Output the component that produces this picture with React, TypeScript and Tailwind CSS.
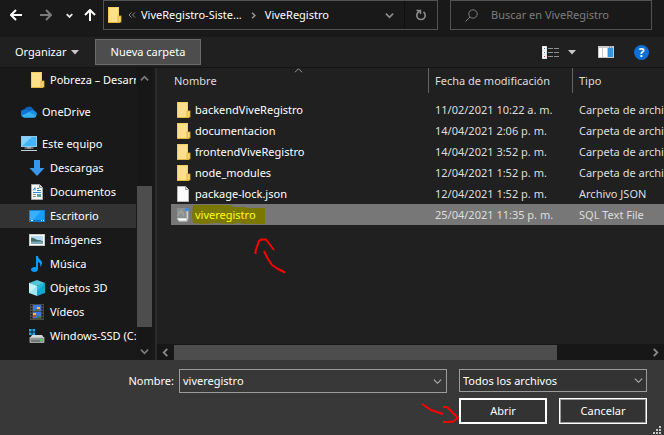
import type { ReactNode } from "react";

type IconProps = { className?: string };

function Folder({ className = "h-4 w-4" }: IconProps) {
  return (
    <svg viewBox="0 0 16 16" className={`shrink-0 ${className}`} aria-hidden="true">
      <rect x="2" y="0" width="11" height="16" fill="#ffe08a" />
      <path d="M2.5 0.5h10v9" fill="none" stroke="#f3cf62" />
      <path d="M2.5 0v16" stroke="#f5cb52" />
      <path d="M2 15.5h12" stroke="#e3b93c" />
      <rect x="12" y="9" width="3" height="6" fill="#f7d573" stroke="#dcae35" strokeWidth="0.8" />
    </svg>
  );
}

function FilePage() {
  return (
    <svg viewBox="0 0 16 16" className="h-4 w-4 shrink-0" aria-hidden="true">
      <path d="M2.500.5h8l3 3v12h-11z" fill="#fafafa" stroke="#b9b9b9" />
      <path d="M10.500.5v3h3" fill="#e2e2e2" stroke="#a0a0a0" />
    </svg>
  );
}

function SqlFile() {
  return (
    <svg viewBox="0 0 16 16" className="h-4 w-4 shrink-0" aria-hidden="true">
      <path d="M2 1h10l1.500 3v8l-1.500 3H4l-2-3z" fill="#a9a9a9" />
      <path d="M2 1h9v10H2z" fill="#8b908e" />
      <path d="M3 9l2-5 4 5M6 3l3 4" fill="none" stroke="#a4a8a6" />
      <path d="M2 11h9.500l.5 3H4z" fill="#dcdcdc" />
      <path d="M4 12.500h7" stroke="#fff" />
      <path d="M12.500 4v8" stroke="#d2d2d2" />
      <rect x="10" y="1" width="4" height="3" rx="1" fill="#3b8be6" />
    </svg>
  );
}

function Cloud() {
  return (
    <svg viewBox="0 0 16 16" className="h-4 w-4 shrink-0" aria-hidden="true">
      <path d="M3 7a5 5 0 0 1 9.500-1.500l1 3-6 3z" fill="#0a62b8" />
      <path d="M3.500 5.500a4 4 0 0 1 4 .8L12 9l-8 4H3A3.700 3.700 0 0 1 3.500 5.500z" fill="#1272cf" />
      <path d="M8 8l2.500-2a3.500 3.500 0 0 1 3 1 3 3 0 0 1 1.500 5L9 12z" fill="#1a8fe3" />
      <path d="M.8 11.500L8 8l7.300 4a2.500 2.500 0 0 1-2.300 1.700H3.300a3 3 0 0 1-2.500-2.200z" fill="#35b0f2" />
    </svg>
  );
}

function Computer() {
  return (
    <svg viewBox="0 0 16 16" className="h-4 w-4 shrink-0" aria-hidden="true">
      <rect x="0.500" y="0.500" width="15" height="10" fill="#42b4fa" stroke="#8fc7e8" />
      <path d="M1 10V1h10z" fill="#83d2ff" />
      <path d="M6 11h4v1.500H6z" fill="#8a9aa5" />
      <path d="M3.500 12h9" stroke="#aebac2" />
      <path d="M0 14.500h16" stroke="#c3ced6" />
    </svg>
  );
}

function Download() {
  return (
    <svg viewBox="0 0 16 16" className="h-4 w-4 shrink-0" aria-hidden="true">
      <path d="M5 0h6v8h4.500L8 16 .5 8H5z" fill="#3996e8" />
    </svg>
  );
}

function Documents() {
  return (
    <svg viewBox="0 0 16 16" className="h-4 w-4 shrink-0" aria-hidden="true">
      <path d="M2.500.5h8l3 3v12h-11z" fill="#fcfcfc" stroke="#a9a9a9" />
      <path d="M10.500.5v3h3" fill="#ddd" stroke="#8f8f8f" />
      <path d="M4 6.500l2-3v3M8 4.500h2M8 6.500h4M4 8.500h8" fill="none" stroke="#2f86d6" />
      <path d="M4 10.500h3M4 12.500h3" stroke="#8a8a8a" />
      <rect x="8" y="10" width="4" height="3" fill="#59a384" />
      <path d="M8 10.500h4" stroke="#4a9be0" />
    </svg>
  );
}

function Desktop() {
  return (
    <svg viewBox="0 0 16 16" className="h-4 w-4 shrink-0" aria-hidden="true">
      <rect x="0.500" y="2.500" width="15" height="11" fill="#1a9dfa" stroke="#1583d4" />
      <path d="M1 13V3h11L3 13z" fill="#38b0ff" />
      <path d="M1 12.500h14" stroke="#0f6fb8" />
      <path d="M2 12.500h2M12 12.500h1M14 12.500h1" stroke="#d7efff" />
    </svg>
  );
}

function Pictures() {
  return (
    <svg viewBox="0 0 16 16" className="h-4 w-4 shrink-0" aria-hidden="true">
      <rect x="0.500" y="2.500" width="15" height="11" fill="#fff" stroke="#c9c9c9" />
      <rect x="2" y="4" width="12" height="8" fill="#b6dcf5" />
      <path d="M2 6c3-1 4 2 7 2s3 1 5 1v1H2z" fill="#3f6f68" />
      <path d="M2 9.500h12V12H2z" fill="#7ba6b5" />
    </svg>
  );
}

function Music() {
  return (
    <svg viewBox="0 0 16 16" className="h-4 w-4 shrink-0" aria-hidden="true">
      <path d="M7 0h2c0 3 4 4 4 7 0 2-1 3-2 4 1-3 0-4-2-5v7c0 1.700-1.600 3-3.500 3S2 15 2 13.500 4 11 5.500 11c.6 0 1 .1 1.500.3z" fill="#0a9cf5" />
    </svg>
  );
}

function Cube() {
  return (
    <svg viewBox="0 0 16 16" className="h-4 w-4 shrink-0" aria-hidden="true">
      <path d="M0 3l8-3 8 3-8 3z" fill="#4fc5da" />
      <path d="M0 3l8 3v10l-8-3z" fill="#9be9f0" />
      <path d="M0 3l8 3-8 7z" fill="#c0f4f7" />
      <path d="M16 3L8 6v10l8-3z" fill="#12a5cf" />
      <path d="M16 3L8 6v5z" fill="#2cb9dc" />
    </svg>
  );
}

function Film() {
  return (
    <svg viewBox="0 0 16 16" className="h-4 w-4 shrink-0" aria-hidden="true">
      <rect x="1" y="0" width="14" height="16" fill="#4b4b4b" />
      <path d="M2.500 1v15M13.500 1v15" stroke="#161616" strokeWidth="1.500" strokeDasharray="1.500 1.500" />
      <rect x="4" y="1" width="8" height="6" fill="#3d78d8" />
      <rect x="4" y="8" width="8" height="6" fill="#3d78d8" />
      <path d="M8 3h3v2H8zM4 9h3v2H4z" fill="#e8c22c" />
      <path d="M6 5h4v2H6zM8 12h4v2H8z" fill="#3a7d44" />
      <path d="M9 5h2v1H9zM5 11h2v2H5z" fill="#c7402f" />
    </svg>
  );
}

function Drive() {
  return (
    <svg viewBox="0 0 16 16" className="h-4 w-4 shrink-0" aria-hidden="true">
      <path d="M0 1h2.500v2.500H0zM3.500 1H6v2.500H3.500zM0 4.500h2.500V7H0zM3.500 4.500H6V7H3.500z" fill="#10aef5" />
      <path d="M3 7h10l2 3H1z" fill="#d6d6d6" />
      <rect x="1" y="9.500" width="14" height="5" fill="#8f9394" stroke="#c9c9c9" strokeWidth="0.700" />
      <path d="M2 13h9" stroke="#55595a" />
      <rect x="11" y="11" width="2" height="2" fill="#39e052" />
    </svg>
  );
}

type ChevronProps = { dir: "up" | "down" | "left" | "right"; className: string; width?: number };

function Chevron({ dir, className, width = 2 }: ChevronProps) {
  const paths = {
    up: "M1 7l4-4 4 4",
    down: "M1 3l4 4 4-4",
    left: "M7 1L3 5l4 4",
    right: "M3 1l4 4-4 4",
  };
  return (
    <svg viewBox="0 0 10 10" className={`shrink-0 ${className}`} aria-hidden="true">
      <path d={paths[dir]} fill="none" stroke="currentColor" strokeWidth={width} />
    </svg>
  );
}

function Caret() {
  return (
    <svg viewBox="0 0 8 5" className="h-[5px] w-2 shrink-0" aria-hidden="true">
      <path d="M0 0h8L4 4.500z" fill="#c8c8c8" />
    </svg>
  );
}

function NavBar() {
  return (
    <header className="flex h-[37px] items-start bg-[#191919]">
      <nav className="flex h-[30px] w-[103px] shrink-0 items-center pl-2.5">
        <button aria-label="Atrás" className="text-white">
          <svg viewBox="0 0 12 12" className="h-3 w-3" aria-hidden="true">
            <path d="M6 1L1 6l5 5M1 6h11" fill="none" stroke="currentColor" strokeWidth="2" />
          </svg>
        </button>
        <button aria-label="Adelante" className="ml-[18px] text-[#7a7a7a]">
          <svg viewBox="0 0 12 12" className="h-3 w-3" aria-hidden="true">
            <path d="M6 1l5 5-5 5M11 6H0" fill="none" stroke="currentColor" strokeWidth="2" />
          </svg>
        </button>
        <button aria-label="Ubicaciones recientes" className="ml-3.5 text-[#e6e6e6]">
          <Chevron dir="down" className="h-[7px] w-[7px]" width={2.5} />
        </button>
        <button aria-label="Subir" className="ml-[11px] text-white">
          <svg viewBox="0 0 12 12" className="h-3 w-3" aria-hidden="true">
            <path d="M1 6l5-5 5 5M6 1v11" fill="none" stroke="currentColor" strokeWidth="2" />
          </svg>
        </button>
      </nav>
      <div className="flex h-[30px] min-w-0 flex-1 items-center border border-[#535353] pl-0.5 text-white">
        <Folder />
        <span className="ml-1.5 flex text-[#8a8a8a]">
          <svg viewBox="0 0 8 6" className="h-1.5 w-2" aria-hidden="true">
            <path d="M3.500.5L1 3l2.500 2.500M7 .5L4.500 3 7 5.500" fill="none" stroke="currentColor" />
          </svg>
        </span>
        <button className="ml-[5px] truncate">ViveRegistro-Siste...</button>
        <Chevron dir="right" className="ml-2 h-[7px] w-[7px] text-[#9a9a9a]" />
        <button className="ml-2">ViveRegistro</button>
        <button aria-label="Ubicaciones anteriores" className="ml-auto text-[#8a8a8a]">
          <Chevron dir="down" className="h-[9px] w-[9px]" />
        </button>
        <button
          aria-label="Actualizar"
          className="ml-2.5 flex h-full w-[33px] items-center justify-center border-l border-[#101010] text-[#8c8c8c]"
        >
          <svg viewBox="0 0 12 12" className="h-3 w-3" aria-hidden="true">
            <path d="M8.500 3A4.200 4.200 0 1 1 3.500 3L5 2" fill="none" stroke="currentColor" strokeWidth="1.600" />
            <path d="M1.500 1.500H5.500V5" fill="none" stroke="currentColor" strokeWidth="1.500" />
          </svg>
        </button>
      </div>
      <label className="mx-3 flex h-[30px] w-[202px] shrink-0 items-center border border-[#535353] pl-3.5 text-[#7d7d7d]">
        <svg viewBox="0 0 13 13" className="h-[13px] w-[13px] shrink-0" aria-hidden="true">
          <circle cx="8" cy="5" r="4.200" fill="none" stroke="currentColor" />
          <path d="M5 8L.5 12.500" stroke="currentColor" />
        </svg>
        <input
          type="search"
          aria-label="Buscar en ViveRegistro"
          placeholder="Buscar en ViveRegistro"
          className="ml-[13px] min-w-0 flex-1 bg-transparent outline-none placeholder:text-[#7d7d7d]"
        />
      </label>
    </header>
  );
}

function Toolbar() {
  return (
    <div className="flex h-[31px] items-center border-b border-[#141414] bg-[#202020] pr-[15px] pl-[15px] text-white">
      <button className="flex w-20 items-center justify-between pr-4">
        Organizar <Caret />
      </button>
      <button className="h-[26px] w-[106px] border border-[#6a6a6a] bg-[#4d4d4d]">Nueva carpeta</button>
      <button aria-label="Cambiar la vista" className="ml-auto">
        <svg viewBox="0 0 17 13" className="h-[13px] w-[17px]" aria-hidden="true">
          <path d="M0 0h5v13H0z" fill="#e2e2e2" />
          <path d="M1 1h3v3H1zM1 5h3v3H1zM1 9h3v3H1z" fill="#fff" />
          <path d="M2 2h1v1H2zM2 6h1v1H2z" fill="#2b70c9" />
          <path d="M2 10h1v1H2z" fill="#c42b3c" />
          <path d="M6 2.500h11M6 6.500h11M6 10.500h11" stroke="#8f8f8f" strokeDasharray="5 1" />
        </svg>
      </button>
      <button aria-label="Más opciones" className="ml-[9px]">
        <Caret />
      </button>
      <button aria-label="Mostrar el panel de vista previa" className="ml-[22px]">
        <svg viewBox="0 0 16 12" className="h-3 w-4" aria-hidden="true">
          <path d="M0 0h16v12H0z" fill="#c9c9c9" />
          <path d="M1 2h3v9H1zM5 2h4v9H5z" fill="#fff" />
          <path d="M10 2h5v9h-5z" fill="#3794e0" />
          <path d="M11 1h1M13 1h1" stroke="#2d79bd" />
        </svg>
      </button>
      <button aria-label="Ayuda" className="ml-5 h-[15px] w-[15px] rounded-full bg-[#0b6fd6] text-xs leading-[15px] font-bold">
        ?
      </button>
    </div>
  );
}

const places: { name: string; icon: ReactNode }[] = [
  { name: "Descargas", icon: <Download /> },
  { name: "Documentos", icon: <Documents /> },
  { name: "Escritorio", icon: <Desktop /> },
  { name: "Imágenes", icon: <Pictures /> },
  { name: "Música", icon: <Music /> },
  { name: "Objetos 3D", icon: <Cube /> },
  { name: "Vídeos", icon: <Film /> },
  { name: "Windows-SSD (C:)", icon: <Drive /> },
];

function Sidebar() {
  return (
    <aside className="flex w-[157px] shrink-0 border-r-2 border-[#2b2b2b] bg-[#191919] text-white">
      <div className="w-[136px] overflow-hidden pb-3 whitespace-nowrap">
        <div className="flex h-6 items-center gap-[5px] pl-[29px]">
          <Folder /> Pobreza – Desarrollo
        </div>
        <div className="my-2 flex h-6 items-center gap-[5px] pl-[21px]">
          <Cloud /> OneDrive
        </div>
        <div className="flex h-6 items-center gap-[5px] pl-[21px]">
          <Computer /> Este equipo
        </div>
        <ul>
          {places.map((place) => (
            <li
              key={place.name}
              className={`flex h-6 items-center gap-[5px] pl-[29px] ${place.name === "Escritorio" ? "bg-[#333333]" : ""}`}
            >
              {place.icon} {place.name}
            </li>
          ))}
        </ul>
      </div>
      <div className="ml-px flex w-[15px] flex-col items-center bg-[#171717] py-1 text-[#7a7a7a]">
        <Chevron dir="up" className="mt-0.5 h-[9px] w-[9px]" />
        <div className="mt-[103px] w-full flex-1 bg-[#4d4d4d]" />
        <Chevron dir="down" className="mt-5 h-[9px] w-[9px]" />
      </div>
    </aside>
  );
}

const files = [
  { name: "backendViveRegistro", date: "11/02/2021 10:22 a. m.", type: "Carpeta de archivos" },
  { name: "documentacion", date: "14/04/2021 2:06 p. m.", type: "Carpeta de archivos" },
  { name: "frontendViveRegistro", date: "14/04/2021 3:52 p. m.", type: "Carpeta de archivos" },
  { name: "node_modules", date: "12/04/2021 1:52 p. m.", type: "Carpeta de archivos" },
  { name: "package-lock.json", date: "12/04/2021 1:52 p. m.", type: "Archivo JSON" },
  { name: "viveregistro", date: "25/04/2021 11:35 p. m.", type: "SQL Text File" },
];

function fileIcon(type: string) {
  if (type === "Archivo JSON") return <FilePage />;
  if (type === "SQL Text File") return <SqlFile />;
  return <Folder />;
}

function FileList() {
  return (
    <main className="relative flex min-w-0 flex-1 flex-col overflow-hidden bg-[#202020]">
      <Chevron dir="up" className="absolute -top-0.5 left-[137px] h-[9px] w-[9px] text-[#a5a5a5]" width={1} />
      <div className="ml-3.5">
        <table className="w-full table-fixed border-collapse text-left whitespace-nowrap text-[#dedede]">
          <thead>
            <tr className="h-[31px] align-top">
              <th className="w-[258px] p-0 font-normal">
                <div className="h-[25px] border-r border-[#636363] pl-[3px] leading-[25px]">Nombre</div>
              </th>
              <th className="w-36 p-0 font-normal">
                <div className="h-[25px] border-r border-[#636363] pl-1.5 leading-[25px]">Fecha de modificación</div>
              </th>
              <th className="p-0 font-normal">
                <div className="pl-1.5 leading-[25px]">Tipo</div>
              </th>
            </tr>
          </thead>
          <tbody>
            {files.map((file) => {
              const selected = file.name === "viveregistro";
              return (
                <tr key={file.name} className={`h-[21px] ${selected ? "bg-[#777777]" : ""}`}>
                  <td className="p-0">
                    <div className="flex items-center gap-1 pl-1">
                      {fileIcon(file.type)}
                      {selected ? (
                        <span className="relative text-[#ffff00]">
                          <svg
                            viewBox="0 0 73 20"
                            className="absolute top-1/2 -left-[3px] h-5 w-[73px] -translate-y-1/2"
                            aria-hidden="true"
                          >
                            <path d="M1 0h39l1 2h12l2 1h18v16H54l-8-1-6 1-16-1-14 1-9-1-1-8z" fill="#7a7800" />
                          </svg>
                          <span className="relative">{file.name}</span>
                        </span>
                      ) : (
                        <span className="text-white">{file.name}</span>
                      )}
                    </div>
                  </td>
                  <td className="p-0 pl-1.5">{file.date}</td>
                  <td className="overflow-hidden p-0 pl-1.5">{file.type}</td>
                </tr>
              );
            })}
          </tbody>
        </table>
      </div>
      <svg viewBox="0 0 32 36" className="absolute top-[170px] left-[97px] h-9 w-8" aria-hidden="true">
        <path
          d="M1.500 16V13L5 3l2-1.500h5L20 12M10 13l4 8 4 6 6 4 7 3.500"
          fill="none"
          stroke="#ff0000"
          strokeWidth="2"
          strokeLinejoin="round"
        />
      </svg>
      <div className="mt-auto flex h-4 items-center bg-[#171717] text-[#8a8a8a]">
        <Chevron dir="left" className="mx-1 h-[9px] w-[9px]" />
        <div className="h-[15px] w-[383px] bg-[#4d4d4d]" />
        <Chevron dir="right" className="mr-1 ml-auto h-[9px] w-[9px]" />
      </div>
    </main>
  );
}

function Footer() {
  return (
    <footer className="relative flex h-[75px] gap-3 bg-[#383838] pt-[9px] pr-[17px] text-white">
      <div className="flex h-6 min-w-0 flex-1">
        <label htmlFor="file-name" className="w-[179px] shrink-0 pr-[5px] text-right leading-6">
          Nombre:
        </label>
        <div className="flex min-w-0 flex-1 items-center border border-[#9b9b9b] bg-[#383838] pr-1">
          <input
            id="file-name"
            type="text"
            defaultValue="viveregistro"
            className="min-w-0 flex-1 bg-transparent pl-[3px] outline-none"
          />
          <Chevron dir="down" className="h-[9px] w-[9px] text-[#b5b5b5]" width={1.2} />
        </div>
      </div>
      <div className="w-[188px] shrink-0">
        <div className="relative">
          <select
            aria-label="Tipo de archivo"
            className="block h-[23px] w-full appearance-none border border-[#9b9b9b] bg-[#333333] pl-[3px] outline-none"
          >
            <option>Todos los archivos</option>
          </select>
          <Chevron
            dir="down"
            className="pointer-events-none absolute top-[7px] right-1 h-[9px] w-[9px] text-[#b5b5b5]"
            width={1.2}
          />
        </div>
        <div className="mt-1.5 grid grid-cols-2 gap-3">
          <button className="h-[26px] border-2 border-white bg-[#333333]">Abrir</button>
          <button className="h-[26px] border border-white bg-[#333333] inset-ring inset-ring-[#9b9b9b]">Cancelar</button>
        </div>
      </div>
      <svg viewBox="0 0 40 20" className="absolute right-[203px] bottom-[12px] h-5 w-10" aria-hidden="true">
        <path
          d="M1 1l9 6 12 4M22 4h4l6 6 5 5-5 3.500-5 .5h-5"
          fill="none"
          stroke="#ff0000"
          strokeWidth="2"
          strokeLinejoin="round"
        />
      </svg>
      <svg viewBox="0 0 8 8" className="absolute right-[3px] bottom-px h-2 w-2" aria-hidden="true">
        <path d="M6 0h2v2H6zM3 3h2v2H3zM6 3h2v2H6zM0 6h2v2H0zM3 6h2v2H3zM6 6h2v2H6z" fill="#c4c4c4" />
      </svg>
    </footer>
  );
}

export default function App() {
  return (
    <div className="bg-[#191919] font-['Noto_Sans','Open_Sans',sans-serif] text-[11px] leading-4">
      <NavBar />
      <Toolbar />
      <div className="flex">
        <Sidebar />
        <FileList />
      </div>
      <Footer />
    </div>
  );
}
